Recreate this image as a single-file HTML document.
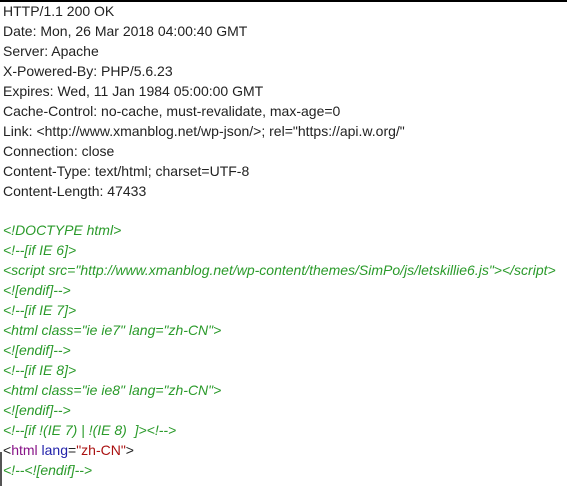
<!DOCTYPE html>
<html><head><style>
html,body{margin:0;padding:0;background:#fff;width:567px;height:486px;overflow:hidden}
body{border-top:2px solid #000;box-sizing:border-box;position:relative}
pre{margin:0;padding:0 0 0 3px;font-family:"Liberation Sans",Arial,sans-serif;font-size:14px;line-height:19.95px;color:#222;white-space:pre}
.c{color:#2a9a2a;font-style:italic}
.t{color:#881288}.a{color:#2222aa}.v{color:#aa1111}
.bar{position:absolute;left:0;top:450px;width:2px;height:36px;background:#555}
</style></head><body>
<pre>HTTP/1.1 200 OK
Date: Mon, 26 Mar 2018 04:00:40 GMT
Server: Apache
X-Powered-By: PHP/5.6.23
Expires: Wed, 11 Jan 1984 05:00:00 GMT
Cache-Control: no-cache, must-revalidate, max-age=0
Link: &lt;http://www.xmanblog.net/wp-json/&gt;; rel="https://api.w.org/"
Connection: close
Content-Type: text/html; charset=UTF-8
Content-Length: 47433

<span class="c">&lt;!DOCTYPE html&gt;</span>
<span class="c">&lt;!--[if IE 6]&gt;</span>
<span class="c">&lt;script src="http://www.xmanblog.net/wp-content/themes/SimPo/js/letskillie6.js"&gt;&lt;/script&gt;</span>
<span class="c">&lt;![endif]--&gt;</span>
<span class="c">&lt;!--[if IE 7]&gt;</span>
<span class="c">&lt;html class="ie ie7" lang="zh-CN"&gt;</span>
<span class="c">&lt;![endif]--&gt;</span>
<span class="c">&lt;!--[if IE 8]&gt;</span>
<span class="c">&lt;html class="ie ie8" lang="zh-CN"&gt;</span>
<span class="c">&lt;![endif]--&gt;</span>
<span class="c">&lt;!--[if !(IE 7) | !(IE 8)  ]&gt;&lt;!--&gt;</span>
&lt;<span class="t">html</span> <span class="a">lang</span>=<span class="v">"zh-CN"</span>&gt;
<span class="c">&lt;!--&lt;![endif]--&gt;</span></pre>
<div class="bar"></div>
</body></html>
